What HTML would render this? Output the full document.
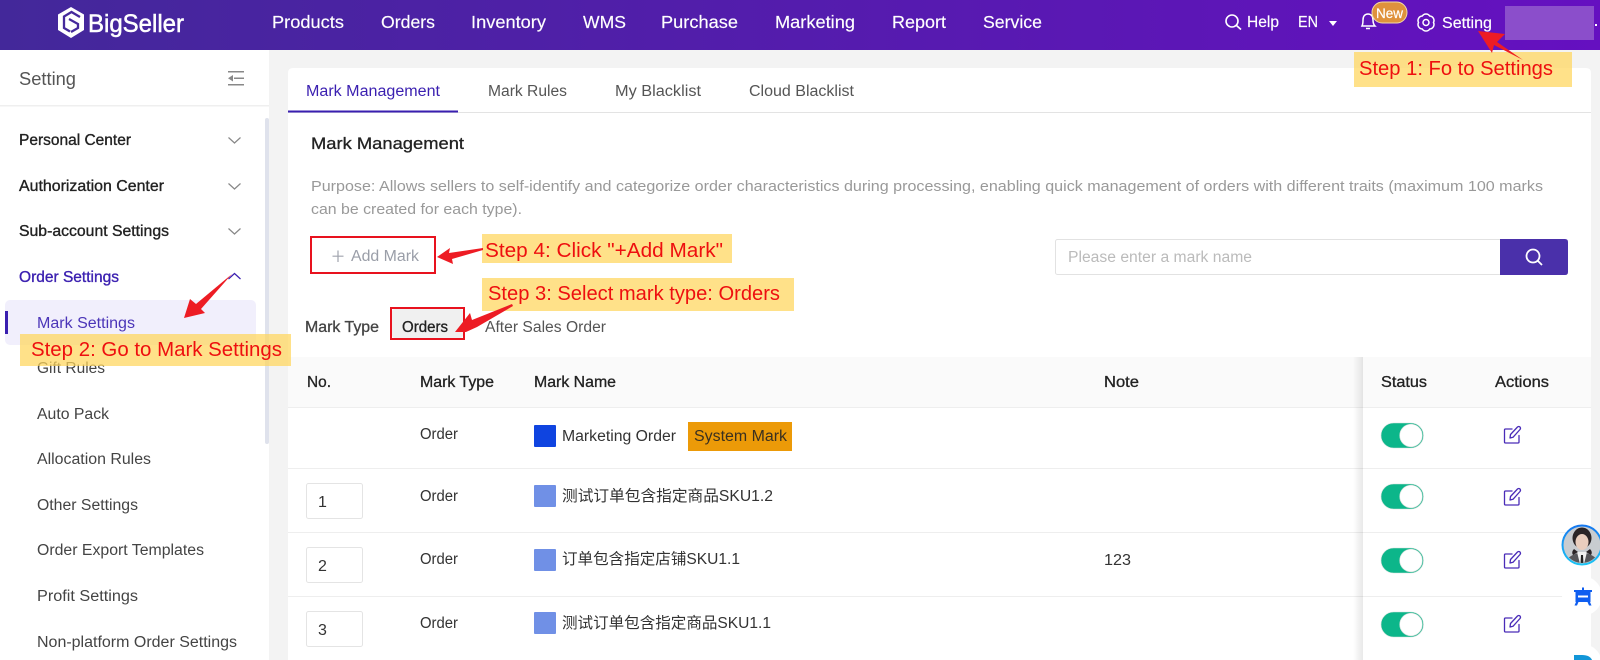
<!DOCTYPE html>
<html><head><meta charset="utf-8"><title>BigSeller Mark Settings</title>
<style>
html,body{margin:0;padding:0;width:1600px;height:660px;overflow:hidden;background:#f3f3f3}
svg{display:block}
text{font-family:"Liberation Sans","Noto Sans CJK SC",sans-serif;font-size:15.5px;fill:#333;white-space:pre}
.n{fill:#fff;font-size:17.5px;stroke:#fff;stroke-width:.15}
.m{stroke:#222;stroke-width:.35;fill:#222}
.s{fill:#444}
.y{fill:#ffd65c;opacity:.72}
.r{fill:#ee0f0f;font-size:20px}
.h{fill:#222;stroke:#222;stroke-width:.3}
</style></head><body>
<svg width="1600" height="660" viewBox="0 0 1600 660" xmlns="http://www.w3.org/2000/svg">
<defs>
<linearGradient id="g" x1="0" x2="1" y1="0" y2="0"><stop offset="0" stop-color="#43289a"/><stop offset="1" stop-color="#6510c0"/></linearGradient>
<linearGradient id="sh" x1="0" x2="1" y1="0" y2="0"><stop offset="0" stop-color="#000" stop-opacity="0"/><stop offset="1" stop-color="#000" stop-opacity=".09"/></linearGradient>
<linearGradient id="ring" x1="0" x2="0" y1="0" y2="1"><stop offset="0" stop-color="#1476f0"/><stop offset="1" stop-color="#1cc6f5"/></linearGradient>
<clipPath id="av"><circle cx="1582" cy="545" r="18"/></clipPath>
</defs>
<rect width="1600" height="660" fill="#f3f3f3"/>
<!-- top nav -->
<rect width="1600" height="50" fill="url(#g)"/>
<path d="M71 7 L84 14.500 V30 L71 38 L58 30 V14.500 Z" fill="#fff"/>
<g fill="none" stroke="#45299b" stroke-width="2.300">
<path d="M80 17 L71.500 12 L64 16.500 V28 L70 31.500"/>
<path d="M69 19 L78 24 V28 L71 32"/>
</g>
<text x="88" y="32" textLength="96" lengthAdjust="spacingAndGlyphs" style="font-size:25px;fill:#fff;stroke:#fff;stroke-width:.5">BigSeller</text>
<text class="n" x="272" y="28" textLength="72" lengthAdjust="spacingAndGlyphs">Products</text>
<text class="n" x="381" y="28" textLength="54" lengthAdjust="spacingAndGlyphs">Orders</text>
<text class="n" x="471" y="28" textLength="75" lengthAdjust="spacingAndGlyphs">Inventory</text>
<text class="n" x="583" y="28" textLength="43" lengthAdjust="spacingAndGlyphs">WMS</text>
<text class="n" x="661" y="28" textLength="77" lengthAdjust="spacingAndGlyphs">Purchase</text>
<text class="n" x="775" y="28" textLength="80" lengthAdjust="spacingAndGlyphs">Marketing</text>
<text class="n" x="892" y="28" textLength="54" lengthAdjust="spacingAndGlyphs">Report</text>
<text class="n" x="983" y="28" textLength="59" lengthAdjust="spacingAndGlyphs">Service</text>
<g fill="none" stroke="#fff" stroke-width="1.6"><circle cx="1232" cy="21" r="6"/><path d="M1236.500 25.500 L1241 29.500"/></g>
<text class="n" style="font-size:15.5px" x="1247" y="27" textLength="32" lengthAdjust="spacingAndGlyphs">Help</text>
<text class="n" style="font-size:15.5px" x="1298" y="27" textLength="20" lengthAdjust="spacingAndGlyphs">EN</text>
<path d="M1329 21 H1337 L1333 26 Z" fill="#fff"/>
<g fill="none" stroke="#fff" stroke-width="1.5"><path d="M1362 26 C1363 24 1363 22 1363 20 C1363 16 1365 14 1368 14 C1371 14 1373 16 1373 20 C1373 22 1373 24 1375 26 Z"/><path d="M1366 28.500 H1370"/></g>
<rect x="1372" y="2" width="35" height="21" rx="10.500" fill="#df923c" stroke="#f2d9a8" stroke-width="1"/>
<text x="1376" y="18" textLength="27" lengthAdjust="spacingAndGlyphs" style="font-size:13.5px;fill:#fff;stroke:#fff;stroke-width:.2">New</text>
<g fill="none" stroke="#fff" stroke-width="1.5"><path d="M1433.500 22.500 A4.500 4.500 0 0 1 1429.750 29 A4.500 4.500 0 0 1 1422.250 29 A4.500 4.500 0 0 1 1418.500 22.500 A4.500 4.500 0 0 1 1422.250 16 A4.500 4.500 0 0 1 1429.750 16 A4.500 4.500 0 0 1 1433.500 22.500 Z"/><circle cx="1426" cy="22.500" r="3"/></g>
<text class="n" style="font-size:15.5px" x="1442" y="28" textLength="50" lengthAdjust="spacingAndGlyphs">Setting</text>
<rect x="1505" y="6" width="89" height="34" fill="#8b4ecb"/>
<rect x="1595" y="24" width="2" height="2" fill="#fff"/>
<!-- sidebar -->
<rect x="0" y="50" width="269" height="610" fill="#fff"/>
<rect x="0" y="105" width="269" height="1.500" fill="#efefef"/>
<text x="19" y="85" textLength="57" lengthAdjust="spacingAndGlyphs" style="font-size:18px;fill:#555">Setting</text>
<g fill="#888"><rect x="228" y="71" width="16" height="1.500"/><rect x="228" y="84" width="16" height="1.500"/><rect x="234" y="77.500" width="10" height="1.500"/><path d="M228 78.200 L233 75 V81.500 Z"/></g>
<rect x="265" y="118" width="4" height="326" rx="2" fill="#dfe2ec"/>
<text class="m" x="19" y="145" textLength="112" lengthAdjust="spacingAndGlyphs">Personal Center</text>
<text class="m" x="19" y="191" textLength="145" lengthAdjust="spacingAndGlyphs">Authorization Center</text>
<text class="m" x="19" y="236" textLength="150" lengthAdjust="spacingAndGlyphs">Sub-account Settings</text>
<text x="19" y="282" textLength="100" lengthAdjust="spacingAndGlyphs" style="fill:#3a1fb0;stroke:#3a1fb0;stroke-width:.35">Order Settings</text>
<g fill="none" stroke="#888" stroke-width="1.200"><path d="M228.500 137.500 L234.500 143 L240.500 137.500"/><path d="M228.500 183.500 L234.500 189 L240.500 183.500"/><path d="M228.500 228.500 L234.500 234 L240.500 228.500"/><path d="M228.500 279 L234.500 273.500 L240.500 279" stroke="#3a1fb0"/></g>
<rect x="5" y="300" width="251" height="45" rx="5" fill="#f1effc"/>
<rect x="5" y="311" width="3" height="23" fill="#3a1fb0"/>
<text x="37" y="328" textLength="98" lengthAdjust="spacingAndGlyphs" style="fill:#4b35b8">Mark Settings</text>
<text class="s" x="37" y="373" textLength="68" lengthAdjust="spacingAndGlyphs">Gift Rules</text>
<text class="s" x="37" y="419" textLength="72" lengthAdjust="spacingAndGlyphs">Auto Pack</text>
<text class="s" x="37" y="464" textLength="114" lengthAdjust="spacingAndGlyphs">Allocation Rules</text>
<text class="s" x="37" y="510" textLength="101" lengthAdjust="spacingAndGlyphs">Other Settings</text>
<text class="s" x="37" y="555" textLength="167" lengthAdjust="spacingAndGlyphs">Order Export Templates</text>
<text class="s" x="37" y="601" textLength="101" lengthAdjust="spacingAndGlyphs">Profit Settings</text>
<text class="s" x="37" y="647" textLength="200" lengthAdjust="spacingAndGlyphs">Non-platform Order Settings</text>
<!-- card -->
<path d="M288 660 V73 Q288 68 293 68 H1586 Q1591 68 1591 73 V660 Z" fill="#fff"/>
<rect x="288" y="112" width="1303" height="1" fill="#e3e3e3"/>
<rect x="288" y="110.500" width="170" height="2" fill="#3a1fb0"/>
<text x="306" y="96" textLength="134" lengthAdjust="spacingAndGlyphs" style="fill:#3a1fb0">Mark Management</text>
<text x="488" y="96" textLength="79" lengthAdjust="spacingAndGlyphs" style="fill:#555">Mark Rules</text>
<text x="615" y="96" textLength="86" lengthAdjust="spacingAndGlyphs" style="fill:#555">My Blacklist</text>
<text x="749" y="96" textLength="105" lengthAdjust="spacingAndGlyphs" style="fill:#555">Cloud Blacklist</text>
<text class="h" x="311" y="149" textLength="153" lengthAdjust="spacingAndGlyphs" style="font-size:17px">Mark Management</text>
<text x="311" y="191" textLength="1232" lengthAdjust="spacingAndGlyphs" style="fill:#999;font-size:14.5px">Purpose: Allows sellers to self-identify and categorize order characteristics during processing, enabling quick management of orders with different traits (maximum 100 marks</text>
<text x="311" y="214" textLength="211" lengthAdjust="spacingAndGlyphs" style="fill:#999;font-size:14.5px">can be created for each type).</text>
<!-- add mark -->
<rect x="311" y="237" width="124" height="36" fill="#fff" stroke="#e8121e" stroke-width="2"/>
<path d="M338 250.500 V262 M332.500 256.200 H343.500" stroke="#a0a4ad" stroke-width="1.200" fill="none"/>
<text x="351" y="261" textLength="68" lengthAdjust="spacingAndGlyphs" style="fill:#9a9ea8">Add Mark</text>
<!-- search -->
<rect x="1055.500" y="239.500" width="446" height="35" rx="2" fill="#fff" stroke="#e2e2e2"/>
<text x="1068" y="262" textLength="184" lengthAdjust="spacingAndGlyphs" style="fill:#bbb">Please enter a mark name</text>
<path d="M1500 239 H1565 Q1568 239 1568 242 V272 Q1568 275 1565 275 H1500 Z" fill="#4a30aa"/>
<g fill="none" stroke="#fff" stroke-width="1.800"><circle cx="1533" cy="256" r="6.500"/><path d="M1538 261 L1542 265"/></g>
<!-- mark type -->
<text x="305" y="332" textLength="74" lengthAdjust="spacingAndGlyphs" style="fill:#444;stroke:#444;stroke-width:.3">Mark Type</text>
<rect x="392" y="309" width="71" height="29" rx="3" fill="#f0f0f0"/>
<rect x="391" y="308" width="73" height="31" fill="none" stroke="#e8121e" stroke-width="2"/>
<text class="h" x="402" y="332" textLength="46" lengthAdjust="spacingAndGlyphs">Orders</text>
<text x="485" y="332" textLength="121" lengthAdjust="spacingAndGlyphs" style="fill:#555">After Sales Order</text>
<!-- table -->
<rect x="288" y="357" width="1303" height="50" fill="#fafafa"/>
<g fill="#eee"><rect x="288" y="407" width="1303" height="1"/><rect x="288" y="468" width="1303" height="1"/><rect x="288" y="532" width="1303" height="1"/><rect x="288" y="596" width="1303" height="1"/></g>
<text class="h" x="307" y="387" textLength="24" lengthAdjust="spacingAndGlyphs">No.</text>
<text class="h" x="420" y="387" textLength="74" lengthAdjust="spacingAndGlyphs">Mark Type</text>
<text class="h" x="534" y="387" textLength="82" lengthAdjust="spacingAndGlyphs">Mark Name</text>
<text class="h" x="1104" y="387" textLength="35" lengthAdjust="spacingAndGlyphs">Note</text>
<text x="420" y="439" textLength="38" lengthAdjust="spacingAndGlyphs">Order</text>
<text x="420" y="501" textLength="38" lengthAdjust="spacingAndGlyphs">Order</text>
<text x="420" y="564" textLength="38" lengthAdjust="spacingAndGlyphs">Order</text>
<text x="420" y="628" textLength="38" lengthAdjust="spacingAndGlyphs">Order</text>
<rect x="534" y="425" width="22" height="22" rx="1" fill="#0f44e0"/>
<rect x="534" y="485" width="22" height="22" rx="1" fill="#7090e6"/>
<rect x="534" y="549" width="22" height="22" rx="1" fill="#7090e6"/>
<rect x="534" y="612" width="22" height="22" rx="1" fill="#7090e6"/>
<text x="562" y="441" textLength="114" lengthAdjust="spacingAndGlyphs">Marketing Order</text>
<rect x="688" y="422" width="104" height="29" fill="#ec9a08"/>
<text x="694" y="441" textLength="93" lengthAdjust="spacingAndGlyphs" style="fill:#3a3020">System Mark</text>
<text x="562" y="501" textLength="211" lengthAdjust="spacingAndGlyphs">测试订单包含指定商品SKU1.2</text>
<text x="562" y="564" textLength="178" lengthAdjust="spacingAndGlyphs">订单包含指定店铺SKU1.1</text>
<text x="562" y="628" textLength="209" lengthAdjust="spacingAndGlyphs">测试订单包含指定商品SKU1.1</text>
<text x="1104" y="565" textLength="27" lengthAdjust="spacingAndGlyphs">123</text>
<g fill="#fff" stroke="#e4e4e4"><rect x="306.500" y="483.500" width="56" height="35" rx="2"/><rect x="306.500" y="547.500" width="56" height="35" rx="2"/><rect x="306.500" y="611.500" width="56" height="35" rx="2"/></g>
<text x="318" y="507" style="font-size:16px">1</text>
<text x="318" y="571" style="font-size:16px">2</text>
<text x="318" y="635" style="font-size:16px">3</text>
<!-- fixed columns -->
<rect x="1353" y="357" width="10" height="303" fill="url(#sh)"/>
<text class="h" x="1381" y="387" textLength="46" lengthAdjust="spacingAndGlyphs">Status</text>
<text class="h" x="1495" y="387" textLength="54" lengthAdjust="spacingAndGlyphs">Actions</text>
<g stroke="#d5e0dc" stroke-width=".6">
<rect x="1381" y="423" width="42.500" height="25" rx="12.500" fill="#0cb68a"/><circle cx="1411" cy="435.500" r="11.300" fill="#fff"/>
<rect x="1381" y="484" width="42.500" height="25" rx="12.500" fill="#0cb68a"/><circle cx="1411" cy="496.500" r="11.300" fill="#fff"/>
<rect x="1381" y="548" width="42.500" height="25" rx="12.500" fill="#0cb68a"/><circle cx="1411" cy="560.500" r="11.300" fill="#fff"/>
<rect x="1381" y="612" width="42.500" height="25" rx="12.500" fill="#0cb68a"/><circle cx="1411" cy="624.500" r="11.300" fill="#fff"/>
</g>
<g fill="none" stroke="#4a2cb8" stroke-width="1.300" stroke-linejoin="round" stroke-linecap="round">
<g id="e"><path d="M1512 429 H1505.500 Q1504.500 429 1504.500 430 V442 Q1504.500 443 1505.500 443 H1518 Q1519 443 1519 442 V435.500"/><path d="M1510 438 L1510.500 434.500 L1517.500 427 Q1518.800 426 1520 427 Q1521 428.300 1520 429.500 L1513 437.300 Z"/></g>
<use href="#e" y="62"/><use href="#e" y="125"/><use href="#e" y="189"/>
</g>
<!-- floating widgets -->
<circle cx="1582" cy="545" r="20.500" fill="url(#ring)"/>
<circle cx="1582" cy="545" r="18.500" fill="#c8ccd0"/>
<g clip-path="url(#av)">
<path d="M1564 566 Q1566 555 1582 552 Q1598 555 1600 566 Z" fill="#56565a"/>
<path d="M1577 552 H1587 L1584 564 H1580 Z" fill="#f0f0f0"/>
<path d="M1581 555 H1583 L1583.500 564 H1580.500 Z" fill="#222"/>
<ellipse cx="1582" cy="538" rx="9.500" ry="10.500" fill="#2a2426"/>
<path d="M1574 549 Q1571 552 1573 555 L1578 552 Z M1590 549 Q1593 552 1591 555 L1586 552 Z" fill="#2a2426"/>
<ellipse cx="1582" cy="542" rx="6.500" ry="8" fill="#e9cdbd"/>
</g>
<circle cx="1582" cy="596" r="20" fill="#fff"/>
<g fill="#0f5ef0"><path d="M1574 590 H1592 V592 H1590.500 V602 H1575.500 V592 H1574 Z"/><rect x="1582" y="587.500" width="2" height="3"/><path d="M1576 602 L1574.500 605.500 H1577 L1578.500 602 Z M1590 602 L1591.500 605.500 H1589 L1587.500 602 Z"/></g>
<rect x="1578" y="595.500" width="10" height="2" fill="#fff"/>
<circle cx="1582" cy="664" r="20" fill="#fff"/>
<path d="M1574 655 H1582 Q1590 655 1592 660 H1574 Z" fill="#1296d8"/>
<!-- annotations -->
<rect class="y" x="1354" y="52" width="218" height="35"/>
<text class="r" x="1359" y="75" textLength="194" lengthAdjust="spacingAndGlyphs">Step 1: Fo to Settings</text>
<path d="M1478 31 L1505 34 L1497 42 L1523 60 L1494 45 L1492 53 Z" fill="#ed1c24"/>
<rect class="y" x="20" y="334" width="271" height="32"/>
<text class="r" x="31" y="356" textLength="251" lengthAdjust="spacingAndGlyphs">Step 2: Go to Mark Settings</text>
<path d="M184 318 L190 299 L196 304 L232 274 L201 309 L205 313 Z" fill="#ed1c24"/>
<rect class="y" x="482" y="234" width="250" height="29"/>
<text class="r" x="485" y="257" textLength="238" lengthAdjust="spacingAndGlyphs">Step 4: Click "+Add Mark"</text>
<path d="M437 257 L450 248 L449 253 L483 248 L483 250 L452 259 L453 264 Z" fill="#ed1c24"/>
<rect class="y" x="482" y="278" width="312" height="33"/>
<text class="r" x="488" y="300" textLength="292" lengthAdjust="spacingAndGlyphs">Step 3: Select mark type: Orders</text>
<path d="M455 332 L470 313 L472 320 L512 304 L513 306 L477 327 L466 332 Z" fill="#ed1c24"/>
</svg>
</body></html>
